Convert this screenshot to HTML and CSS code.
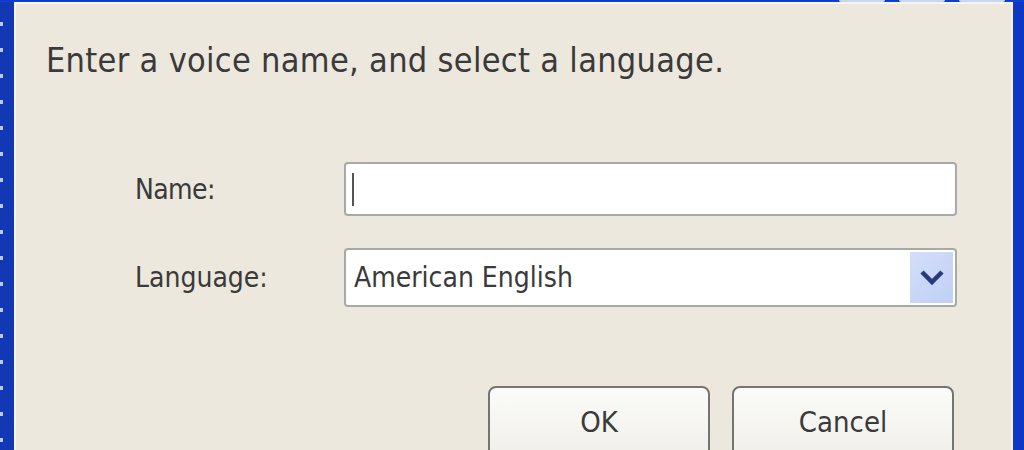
FILE: index.html
```html
<!DOCTYPE html>
<html lang="en">
<head>
    <meta charset="UTF-8">
    <title>New Voice</title>
    <link rel="stylesheet" href="styles.css">
</head>
<body>
    <div class="window">
        <div class="titlebar">
            <span class="tb-btn"></span>
            <span class="tb-btn"></span>
            <span class="tb-btn"></span>
        </div>
        <div class="frame">
            <div class="client">
                <p class="prompt">Enter a voice name, and select a language.</p>

                <div class="form">
                    <label class="label" for="voiceName">Name:</label>
                    <div class="textbox"><span class="caret"></span></div>

                    <label class="label">Language:</label>
                    <div class="combo">
                        <span class="combo-text">American English</span>
                        <span class="combo-btn">
                            <svg width="26" height="18" viewBox="0 0 26 18">
                                <path d="M3 3 L13 13 L23 3" fill="none" stroke="#28397e" stroke-width="4.5"/>
                            </svg>
                        </span>
                    </div>
                </div>

                <div class="buttons">
                    <button class="btn">OK</button>
                    <button class="btn">Cancel</button>
                </div>
            </div>
        </div>
    </div>
</body>
</html>
```

FILE: styles.css
```css
body {
    margin: 0;
    width: 1024px;
    height: 450px;
    overflow: hidden;
    background: #ece8dd;
    font-family: "DejaVu Sans Condensed", "DejaVu Sans", sans-serif;
    color: #3a3a3a;
}

.window {
    height: 450px;
    display: flex;
    flex-direction: column;
    padding-left: 3px;
    background: repeating-linear-gradient(#1238b4 0, #1238b4 22px, #b9c8ee 22px, #b9c8ee 26px);
}

.titlebar {
    height: 8px;
    margin-left: -3px;
    background: linear-gradient(#0a3bc8, #1046d8);
    display: flex;
    justify-content: flex-end;
    gap: 14px;
    padding-right: 19px;
}
.tb-btn {
    width: 46px;
    height: 2px;
    background: #c9d6f2;
    border-radius: 0 0 3px 3px;
}

.frame {
    flex: 1;
    display: flex;
    border-left: 11px solid #1238b4;
    border-right: 11px solid #0c36c4;
}

.client {
    flex: 1;
    background: #ece8dd;
    border-top: 2px solid #f6f5ef;
    border-left: 2px solid #f4f4f2;
    border-right: 2px solid #f3efe8;
    padding: 0 0 0 30px;
}

.prompt {
    margin: 34px 0 0 0;
    font-size: 34px;
    line-height: 44px;
    letter-spacing: 0.3px;
}

.form {
    display: grid;
    grid-template-columns: 209px 613px;
    row-gap: 32px;
    margin: 80px 0 0 89px;
    align-items: center;
}

.label {
    font-size: 28px;
}
.label:first-child {
    letter-spacing: -0.6px;
}

.textbox {
    height: 50px;
    background: #fff;
    border: 2px solid #a9a9a6;
    border-radius: 4px;
    display: flex;
    align-items: center;
    padding-left: 6px;
}
.caret {
    width: 2px;
    height: 33px;
    background: #555;
}

.combo {
    height: 55px;
    background: #fff;
    border: 2px solid #a9a9a6;
    border-radius: 4px;
    display: flex;
    align-items: center;
    justify-content: space-between;
    padding: 0 2px 0 8px;
}
.combo-text {
    font-size: 28px;
}
.combo-btn {
    width: 43px;
    height: 51px;
    background: linear-gradient(135deg, #d3def9, #bfd0f5);
    display: flex;
    align-items: center;
    justify-content: center;
}

.buttons {
    display: flex;
    gap: 22px;
    margin: 79px 0 0 442px;
}
.btn {
    width: 222px;
    height: 80px;
    border: 2px solid #747470;
    border-radius: 8px;
    background: linear-gradient(#fbfbf9, #efeee8);
    font-family: "DejaVu Sans Condensed", "DejaVu Sans", sans-serif;
    font-size: 29px;
    color: #3a3a3a;
    padding: 0 0 8px 0;
}
```
